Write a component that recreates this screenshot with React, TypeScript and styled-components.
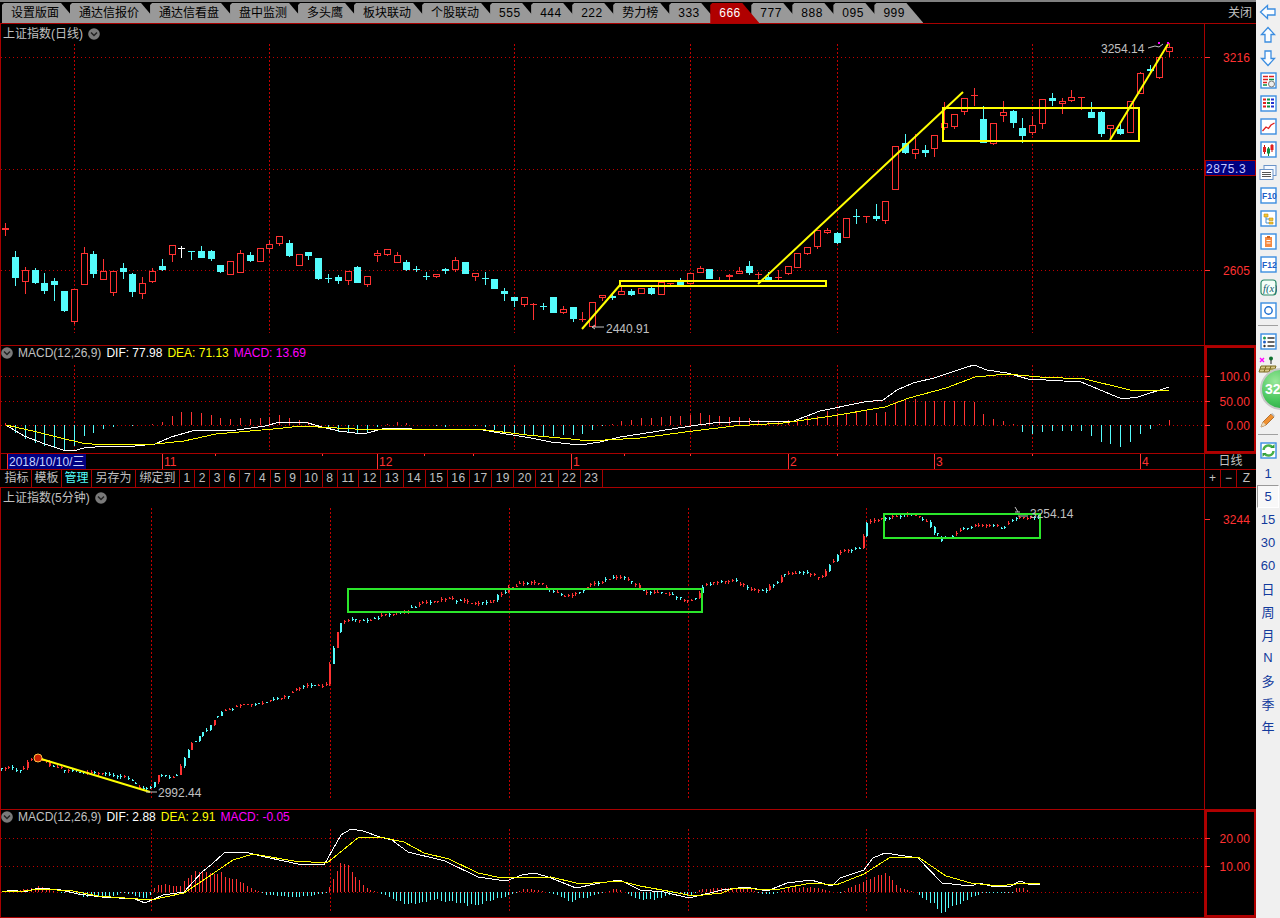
import React from 'react'
import styled, { createGlobalStyle } from 'styled-components'

const RED = '#ff3232'
const CYAN = '#54fcfc'
const LINE = '#a80000'
const DOT = '#c00000'
const GREY = '#c0c0c0'
const YELLOW = '#ffff00'
const GREEN = '#2be62b'

type Candle = [number, number, number, number, 'u' | 'd' | 'w']

// wick top, body top, body bottom, wick bottom, kind
const dayCandles: Candle[] = [
  [223, 228, 230, 236, 'u'], [251, 257, 278, 286, 'd'], [267, 270, 282, 294, 'u'], [268, 270, 283, 284, 'd'],
  [273, 283, 291, 294, 'd'], [278, 281, 285, 301, 'd'], [291, 291, 311, 312, 'd'], [289, 289, 322, 324, 'u'],
  [247, 253, 285, 285, 'u'], [251, 254, 274, 278, 'd'], [259, 271, 280, 280, 'u'], [271, 271, 293, 296, 'u'],
  [263, 268, 272, 279, 'd'], [273, 274, 292, 297, 'd'], [277, 283, 294, 299, 'u'], [268, 271, 282, 283, 'u'],
  [259, 266, 270, 271, 'd'], [245, 245, 255, 262, 'u'], [246, 248, 249, 258, 'w'], [251, 251, 252, 260, 'd'],
  [246, 251, 258, 258, 'd'], [250, 251, 259, 261, 'd'], [265, 265, 272, 273, 'd'], [261, 261, 275, 275, 'u'],
  [250, 253, 273, 273, 'u'], [252, 255, 261, 262, 'd'], [248, 248, 262, 262, 'u'], [240, 244, 249, 253, 'u'],
  [236, 236, 244, 246, 'u'], [240, 243, 256, 257, 'd'], [254, 254, 266, 266, 'u'], [252, 252, 256, 260, 'd'],
  [258, 258, 279, 280, 'd'], [274, 278, 279, 283, 'd'], [275, 277, 281, 284, 'd'], [271, 271, 281, 285, 'u'],
  [266, 267, 283, 283, 'd'], [276, 276, 285, 287, 'u'], [250, 253, 256, 262, 'u'], [249, 249, 255, 256, 'u'],
  [252, 255, 263, 263, 'u'], [260, 262, 270, 271, 'd'], [266, 269, 270, 272, 'd'], [272, 276, 277, 280, 'd'],
  [274, 274, 277, 278, 'u'], [268, 269, 271, 274, 'd'], [257, 260, 270, 272, 'u'], [262, 262, 274, 274, 'd'],
  [273, 273, 277, 281, 'u'], [272, 278, 279, 285, 'd'], [279, 279, 289, 289, 'd'], [288, 291, 294, 301, 'd'],
  [297, 297, 301, 307, 'd'], [297, 297, 305, 307, 'u'], [303, 304, 305, 320, 'u'], [303, 306, 307, 310, 'd'],
  [297, 297, 313, 313, 'd'], [306, 309, 313, 314, 'u'], [307, 307, 319, 322, 'd'], [312, 319, 320, 322, 'u'],
  [302, 302, 327, 327, 'u'], [295, 295, 298, 301, 'u'], [293, 296, 298, 300, 'd'], [287, 291, 295, 295, 'u'],
  [289, 291, 295, 296, 'd'], [288, 288, 294, 294, 'u'], [287, 288, 294, 295, 'd'], [282, 282, 295, 295, 'u'],
  [283, 283, 284, 285, 'u'], [278, 281, 285, 285, 'd'], [273, 273, 284, 284, 'u'], [266, 268, 273, 273, 'u'],
  [269, 269, 279, 279, 'd'], [277, 281, 282, 282, 'u'], [274, 275, 277, 282, 'u'], [267, 271, 274, 274, 'u'],
  [261, 266, 273, 275, 'd'], [272, 274, 275, 279, 'u'], [272, 277, 280, 280, 'd'], [270, 277, 278, 282, 'u'],
  [266, 266, 274, 275, 'u'], [253, 253, 268, 268, 'u'], [247, 247, 254, 255, 'u'], [230, 230, 247, 249, 'u'],
  [228, 230, 233, 234, 'u'], [232, 233, 243, 244, 'd'], [218, 218, 238, 238, 'u'], [209, 216, 217, 224, 'd'],
  [216, 216, 217, 223, 'u'], [204, 216, 219, 221, 'd'], [201, 201, 221, 224, 'u'], [146, 146, 190, 190, 'u'],
  [134, 143, 153, 154, 'd'], [134, 149, 154, 159, 'u'], [145, 150, 153, 157, 'd'], [135, 135, 149, 157, 'u'],
  [102, 123, 128, 130, 'u'], [114, 114, 127, 129, 'u'], [98, 98, 112, 115, 'u'], [88, 95, 96, 106, 'u'],
  [106, 119, 143, 143, 'd'], [123, 123, 144, 145, 'u'], [101, 112, 116, 122, 'u'], [110, 111, 123, 128, 'd'],
  [118, 128, 136, 143, 'd'], [116, 125, 133, 135, 'u'], [99, 99, 124, 129, 'u'], [93, 98, 101, 106, 'd'],
  [98, 101, 104, 114, 'u'], [90, 97, 101, 102, 'u'], [97, 97, 98, 110, 'u'], [102, 112, 118, 118, 'd'],
  [111, 112, 134, 137, 'd'], [125, 125, 129, 140, 'u'], [124, 129, 134, 135, 'd'], [101, 101, 133, 133, 'u'],
  [72, 73, 94, 94, 'u'], [65, 69, 71, 74, 'd'], [57, 57, 78, 79, 'u'], [43, 47, 52, 57, 'u'],
]

const dayHistogram = [
  423, 433, 439, 443, 446, 448, 450, 446, 436, 433, 429, 427, 425, 426, 425, 424, 422, 416, 412, 412,
  413, 415, 418, 419, 418, 419, 418, 417, 415, 418, 420, 422, 426, 429, 432, 432, 433, 432, 427, 424,
  422, 423, 425, 425, 426, 427, 425, 425, 426, 427, 430, 432, 433, 434, 435, 436, 436, 435, 435, 434,
  430, 426, 424, 421, 420, 418, 418, 417, 416, 416, 415, 413, 415, 416, 417, 417, 418, 420, 422, 422,
  420, 419, 417, 416, 411, 413, 413, 411, 411, 413, 412, 402, 400, 399, 401, 401, 401, 401, 401, 402,
  414, 419, 421, 424, 432, 434, 432, 431, 431, 431, 431, 436, 442, 444, 447, 442, 434, 429, 424, 420,
]

const dayDif = '6,425 24,436 45,444 63,450 73,451 84,448 106,446 135,446 155,444 171,437 192,431 237,430 265,426 280,422 308,423 322,427 339,431 355,433 367,433 386,428 412,429 478,429 494,432 531,438 551,442 580,445 600,442 620,437 640,434 691,426 713,423 750,421 791,422 820,411 864,402 883,400 897,390 913,383 934,378 967,367 974,365 987,370 1007,373 1028,379 1081,382 1122,399 1138,397 1169,387'
const dayDea = '6,425 37,432 61,438 82,443 102,445 155,444 184,441 216,434 273,429 302,426 318,427 355,429 388,429 478,429 527,435 571,439 588,441 640,438 693,431 734,426 783,423 832,416 885,407 909,398 946,388 975,377 1007,374 1040,377 1085,379 1130,390 1158,391 1169,390'
const minDif = '2,892 12,890 24,892 39,888 61,890 78,894 102,897 135,899 145,903 163,895 184,892 202,872 212,864 224,853 245,852 265,857 298,864 324,865 341,835 351,829 363,831 380,837 392,840 408,852 445,861 478,877 506,881 522,875 535,873 551,878 576,888 600,883 620,880 640,890 664,892 689,898 722,890 746,887 767,891 787,883 811,880 832,886 840,878 864,870 873,858 885,853 918,858 942,883 971,886 979,883 991,886 1011,886 1020,881 1028,884 1040,884'
const minDea = '2,892 24,891 41,889 73,891 98,896 151,900 184,893 208,877 233,860 253,854 294,861 327,863 343,850 359,837 380,837 404,842 424,853 449,859 478,873 502,878 551,877 580,884 620,881 640,886 673,892 693,896 722,893 734,888 775,890 811,883 836,885 864,874 889,858 918,857 946,876 971,883 999,886 1024,883 1040,884'

const minHistogramShape: number[][] = [
  [2, 0], [12, 1], [30, 4], [39, 6], [49, 3], [61, -1], [73, 0], [82, -6], [114, -5], [122, 0], [139, -5], [149, -7],
  [155, 7], [163, 9], [180, 7], [192, 20], [202, 24], [218, 22], [224, 20], [241, 12], [253, 3], [261, 0], [265, -3],
  [294, -6], [300, -6], [326, -1], [330, 8], [341, 32], [351, 25], [367, 3], [380, -1], [408, -15], [433, -8],
  [473, -15], [506, -5], [526, 4], [547, 0], [571, -10], [600, -2], [616, 4], [640, -9], [655, -8], [673, -1],
  [690, -5], [700, 3], [730, 5], [750, 3], [760, -2], [775, -2], [790, 5], [815, 5], [830, 1], [840, -1], [846, 3],
  [860, 10], [880, 20], [886, 20], [900, 5], [912, 1], [915, 0], [920, -5], [935, -15], [942, -22], [950, -18],
  [965, -10], [971, -5], [985, -1], [1012, -1], [1015, 4], [1025, 4], [1030, 0], [1040, 0],
]

const minPriceShape: number[][] = [
  [0, 770], [8, 768], [20, 772], [30, 760], [38, 758], [50, 765], [65, 770], [90, 773], [120, 776], [135, 785], [148, 790],
  [158, 775], [175, 778], [190, 745], [205, 730], [222, 712], [240, 706], [262, 703], [285, 697], [302, 686], [325, 687],
  [330, 660], [338, 625], [350, 618], [365, 622], [385, 615], [400, 612], [425, 603], [445, 598], [470, 604], [490, 602],
  [510, 587], [530, 581], [550, 590], [565, 598], [590, 585], [620, 576], [640, 590], [670, 595], [690, 603], [704, 585],
  [730, 580], [750, 590], [765, 590], [785, 574], [800, 572], [820, 578], [838, 553], [860, 547], [866, 522], [885, 518],
  [905, 514], [925, 520], [940, 541], [960, 530], [985, 523], [1000, 530], [1015, 518], [1040, 517],
]

const interp = (shape: number[][], x: number) => {
  for (let i = 1; i < shape.length; i++) {
    if (x <= shape[i][0]) {
      const [x0, y0] = shape[i - 1]
      const [x1, y1] = shape[i]
      return y0 + ((y1 - y0) * (x - x0)) / (x1 - x0)
    }
  }
  return shape[shape.length - 1][1]
}

// repeatable noise so the small bars do not look like a straight ramp
const noise = (i: number) => {
  const s = Math.sin(i * 12.9898) * 43758.5453
  return s - Math.floor(s)
}

const MIN_STEP = 3.73
const minBars = Array.from({ length: 279 }, (_, i) => 1 + i * MIN_STEP)

const minCandles: Candle[] = minBars.map((x, i) => {
  const close = interp(minPriceShape, x) + (noise(i) - 0.5) * 3
  const open = interp(minPriceShape, x - MIN_STEP) + (noise(i - 1) - 0.5) * 3
  const top = Math.round(Math.min(open, close))
  // bodies stay flat unless the price really moves
  const bottom = Math.abs(open - close) > 4 ? Math.round(Math.max(open, close)) : top + 1
  const rising = noise(i + 29) > 0.45
  return [top - Math.round(noise(i + 7) * 2.4), top, bottom, bottom + Math.round(noise(i + 13) * 2.4), rising ? 'u' : 'd']
})

const GlobalStyle = createGlobalStyle`
  html, body {
    margin: 0;
    background: #000;
    overflow: hidden;
  }
  body {
    font-family: 'Liberation Sans', 'Noto Sans CJK SC', sans-serif;
    font-size: 12px;
    color: ${GREY};
  }
  svg {
    display: block;
  }
`

const Screen = styled.div`
  display: flex;
  width: 1280px;
  height: 918px;
  overflow: hidden;
`

const Main = styled.div`
  display: flex;
  flex-direction: column;
  width: 1256px;
  flex: none;
`

const TabBar = styled.div`
  display: flex;
  align-items: flex-end;
  box-sizing: border-box;
  height: 24px;
  padding-left: 2px;
  border-top: 2px solid #808080;
  border-bottom: 1px solid ${LINE};
`

const Tab = styled.div<{ $active?: boolean; $digits?: boolean }>`
  position: relative;
  z-index: ${(p) => (p.$active ? 2 : 1)};
  height: 20px;
  line-height: 20px;
  padding: 0 ${(p) => (p.$digits ? 18.5 : 19)}px 0 9px;
  margin-right: -8px;
  letter-spacing: ${(p) => (p.$digits ? 0.5 : 0)}px;
  white-space: nowrap;
  color: ${(p) => (p.$active ? '#fff' : '#000')};
  background: ${(p) => (p.$active ? '#b00000' : '#999999')};
  clip-path: polygon(2px 0, calc(100% - 17px) 0, 100% 100%, 0 100%, 0 2px);
`

const CloseButton = styled.div`
  margin-left: auto;
  margin-right: 4px;
  height: 20px;
  line-height: 20px;
`

const Panel = styled.section<{ $height: number }>`
  display: flex;
  box-sizing: border-box;
  height: ${(p) => p.$height}px;
  border-left: 1px solid ${LINE};
  border-bottom: 1px solid ${LINE};
  flex: none;
`

const PlotColumn = styled.div`
  display: flex;
  flex-direction: column;
  width: 1203px;
`

const Header = styled.div<{ $height: number }>`
  display: flex;
  align-items: flex-start;
  gap: 5px;
  height: ${(p) => p.$height}px;
  padding: 3px 0 0 2px;
  box-sizing: border-box;
  line-height: 15px;
  white-space: nowrap;
`

const MacdHeader = styled(Header)`
  padding: 0;
`

const Reading = styled.span<{ $color: string }>`
  color: ${(p) => p.$color};
`

const ChevronIcon = styled.svg`
  flex: none;
  margin-top: 1px;
`

const AxisColumn = styled.div<{ $boxed?: boolean }>`
  width: 52px;
  box-sizing: border-box;
  border-left: 1px solid ${LINE};
  box-shadow: ${(p) => (p.$boxed ? 'inset 0 0 0 2px #b00000' : 'none')};
`

const ChartText = styled.text<{ $color?: string }>`
  font-family: 'Liberation Sans', 'Noto Sans CJK SC', sans-serif;
  font-size: 12px;
  fill: ${(p) => p.$color || GREY};
`

const AxisText = styled(ChartText)`
  text-anchor: end;
  letter-spacing: 0.1px;
`

const FrameText = styled.text`
  font-family: 'Liberation Sans', sans-serif;
  font-size: 8.5px;
  font-weight: 700;
  fill: #1f5fc8;
`

const FormulaText = styled.text`
  font-family: 'Liberation Serif', serif;
  font-style: italic;
  font-size: 10.5px;
  fill: #0f5a70;
`

const TimeRow = styled.div`
  display: flex;
  box-sizing: border-box;
  height: 16px;
  flex: none;
  border-left: 1px solid ${LINE};
  border-bottom: 1px solid ${LINE};
`

const DayLabel = styled.div`
  flex: 1;
  text-align: center;
  line-height: 15px;
  border-left: 1px solid ${LINE};
`

const ToolRow = styled.div`
  display: flex;
  box-sizing: border-box;
  height: 18px;
  flex: none;
  padding-left: 2px;
  border-bottom: 1px solid ${LINE};
  line-height: 17px;
`

const ToolButton = styled.div<{ $narrow?: boolean; $selected?: boolean; $number?: boolean }>`
  padding: 0 ${(p) => (p.$narrow ? 2.5 : 3.5)}px;
  border-right: 1px solid ${LINE};
  letter-spacing: ${(p) => (p.$number ? 0.4 : 0)}px;
  color: ${(p) => (p.$selected ? CYAN : GREY)};
`

const ZoomButtons = styled.div`
  display: flex;
  margin-left: auto;
  width: 52px;
  text-align: center;
`

const ZoomButton = styled.div<{ $width: number }>`
  box-sizing: border-box;
  width: ${(p) => p.$width}px;
  border-left: 1px solid ${LINE};
`

const Sidebar = styled.aside`
  display: flex;
  flex-direction: column;
  align-items: center;
  flex: 1;
  background: #f0f0f0;
`

const SideItem = styled.div`
  display: flex;
  align-items: center;
  justify-content: center;
  width: 100%;
  height: 23px;
  flex: none;
`

const SideDivider = styled.div`
  width: 20px;
  height: 1px;
  margin: 3px 0 4px;
  background: #a0a0a0;
  flex: none;
`

const BallSlot = styled(SideItem)`
  position: relative;
  height: 32px;
`

const Ball = styled.div`
  position: absolute;
  left: 4px;
  top: -8px;
  width: 42px;
  height: 42px;
  box-sizing: border-box;
  border: 2px solid #c8c8c8;
  border-radius: 50%;
  padding-left: 3px;
  line-height: 38px;
  font-size: 14px;
  font-weight: bold;
  color: #fff;
  background: radial-gradient(circle at 35% 30%, #9ae89a 0%, #45c45a 55%, #1f9a3c 100%);
`

const PeriodButton = styled(SideItem)<{ $active?: boolean }>`
  font-size: 13px;
  color: #123a9c;
  box-sizing: border-box;
  ${(p) =>
    p.$active
      ? `
    background: #f8f8f8;
    border-top: 1px solid #999;
    border-left: 1px solid #999;
    border-bottom: 1px solid #fff;
    border-right: 1px solid #fff;
    width: 22px;
  `
      : ''}
`

const tabs = ['设置版面', '通达信报价', '通达信看盘', '盘中监测', '多头鹰', '板块联动', '个股联动', '555', '444', '222', '势力榜', '333', '666', '777', '888', '095', '999']
const toolNumbers = [1, 2, 3, 6, 7, 4, 5, 9, 10, 8, 11, 12, 13, 14, 15, 16, 17, 19, 20, 21, 22, 23]
const periods = ['1', '5', '15', '30', '60', '日', '周', '月', 'N', '多', '季', '年']

const dayX = (i: number) => Math.round(5.3 + 9.78 * i) + 0.5

const Chevron: React.FC = () => (
  <ChevronIcon width="12" height="12" viewBox="0 0 12 12">
    <circle cx="6" cy="6" r="5.8" fill="#7a7a7a" />
    <path d="M3 4.5 L6 7.5 L9 4.5" fill="none" stroke="#222" strokeWidth="1.5" />
  </ChevronIcon>
)

const Plot: React.FC<{ top: number; height: number; children: React.ReactNode }> = ({ top, height, children }) => (
  <svg width="1203" height={height} viewBox={`1 ${top} 1203 ${height}`} shapeRendering="crispEdges">
    {children}
  </svg>
)

const Axis: React.FC<{ top: number; height: number; children: React.ReactNode }> = ({ top, height, children }) => (
  <svg width="51" height={height} viewBox={`1205 ${top} 51 ${height}`}>
    {children}
  </svg>
)

const Tick: React.FC<{ y: number; label: string }> = ({ y, label }) => (
  <>
    <line x1="1205" x2="1210" y1={y + 0.5} y2={y + 0.5} stroke={RED} shapeRendering="crispEdges" />
    <AxisText x="1250" y={y + 4.5} $color={RED}>
      {label}
    </AxisText>
  </>
)

const HGrid: React.FC<{ ys: number[] }> = ({ ys }) => (
  <>
    {ys.map((y) => (
      <line key={y} x1="1" x2="1204" y1={y + 0.5} y2={y + 0.5} stroke={DOT} strokeDasharray="1 3" />
    ))}
  </>
)

const VGrid: React.FC<{ xs: number[]; from: number; to: number }> = ({ xs, from, to }) => (
  <>
    {xs.map((x) => (
      <line key={x} x1={x + 0.5} x2={x + 0.5} y1={from} y2={to} stroke={DOT} strokeDasharray="2 2" />
    ))}
  </>
)

const CandleMark: React.FC<{ x: number; c: Candle; half: number }> = ({ x, c, half }) => {
  const [wickTop, top, bottom, wickBottom, kind] = c
  const color = kind === 'u' ? RED : kind === 'd' ? CYAN : '#ffffff'
  const flat = bottom - top <= 2
  return (
    <>
      <line x1={x} x2={x} y1={wickTop} y2={top} stroke={color} />
      <line x1={x} x2={x} y1={bottom} y2={wickBottom} stroke={color} />
      {flat || kind !== 'u' ? (
        <rect x={x - half - 0.5} y={top} width={half * 2 + 1} height={Math.max(bottom - top, 1)} fill={color} />
      ) : (
        <rect x={x - half} y={top + 0.5} width={half * 2} height={bottom - top - 1} fill="#000" stroke={color} />
      )}
    </>
  )
}

const Bars: React.FC<{ bars: { x: number; tip: number }[]; zero: number }> = ({ bars, zero }) => (
  <>
    {bars.map((b, i) => (
      <line key={i} x1={b.x} x2={b.x} y1={zero} y2={b.tip} stroke={b.tip < zero ? RED : CYAN} />
    ))}
  </>
)

const Line: React.FC<{ points: string; color: string }> = ({ points, color }) => (
  <polyline points={points} fill="none" stroke={color} strokeWidth="1" />
)

const Frame: React.FC<{ children?: React.ReactNode }> = ({ children }) => (
  <svg width="17" height="17" viewBox="0 0 17 17">
    <rect x="1" y="1" width="15" height="15" fill="#fff" stroke="#3b8de0" strokeWidth="1.4" />
    {children}
  </svg>
)

const Arrow: React.FC<{ turn: number }> = ({ turn }) => (
  <svg width="18" height="18" viewBox="0 0 18 18">
    <path
      transform={`rotate(${turn} 9 9)`}
      d="M9 1.5 L15.5 8.5 H12 V16 H6 V8.5 H2.5 Z"
      fill="#fbfdff"
      stroke="#3b8de0"
      strokeWidth="1.3"
    />
  </svg>
)

const sideIcons: React.ReactNode[] = [
  <Arrow turn={-90} />,
  <Arrow turn={0} />,
  <Arrow turn={180} />,
  <Frame>
    <path d="M3 4.5h5M3 7.5h5M3 10.5h4M9 4.5h5" stroke="#e02020" strokeWidth="1.5" />
    <path d="M9 7.5h5M3 13h4" stroke="#109040" strokeWidth="1.5" />
    <circle cx="11.5" cy="12" r="3" fill="#eee" stroke="#777" />
  </Frame>,
  <Frame>
    <path d="M3 4.5h3M3 8h3M3 11.5h3" stroke="#e02020" strokeWidth="2" />
    <path d="M7 4.5h3M7 8h3M7 11.5h3" stroke="#109040" strokeWidth="2" />
    <path d="M11 4.5h3M11 8h3M11 11.5h3" stroke="#2030d0" strokeWidth="2" />
  </Frame>,
  <Frame>
    <path d="M2.5 13 L6 9 L8.5 10.5 L11 7 L14.5 5" fill="none" stroke="#e02020" strokeWidth="1.3" />
  </Frame>,
  <Frame>
    <path d="M4.5 4v9M12 3v8" stroke="#c01010" />
    <path d="M8.5 6v9" stroke="#108030" />
    <rect x="3" y="6" width="3" height="5" fill="#e02020" />
    <rect x="7" y="7.5" width="3" height="5" fill="#109040" />
    <rect x="10.5" y="4" width="3" height="5" fill="#e02020" />
  </Frame>,
  <svg width="18" height="17" viewBox="0 0 18 17">
    <rect x="5" y="1.5" width="12" height="10" fill="#f4f8ff" stroke="#6a93c8" />
    <rect x="1" y="5.5" width="13" height="10" fill="#fff" stroke="#6a93c8" />
    <path d="M3 8.5h9M3 10.5h9M3 12.5h9" stroke="#555" />
  </svg>,
  <Frame>
    <FrameText x="2" y="12">F10</FrameText>
  </Frame>,
  <Frame>
    <path d="M4 4h4v3H4zM9 8h4v2.5H9zM9 12h4v2H9z" fill="#f4c430" stroke="#c09010" strokeWidth="0.6" />
    <path d="M6 7v6h3M6 9h3" fill="none" stroke="#4a90d0" />
  </Frame>,
  <Frame>
    <path d="M5 4h7v10H5z" fill="#f58a42" />
    <path d="M7 3h3v2H7z" fill="#d0601c" />
    <path d="M6.5 7.5h4M6.5 10h4" stroke="#fff" />
  </Frame>,
  <Frame>
    <FrameText x="2" y="12">F12</FrameText>
  </Frame>,
  <svg width="17" height="17" viewBox="0 0 17 17">
    <rect x="1" y="1" width="15" height="15" rx="3" fill="#f4fff8" stroke="#2a8a68" strokeWidth="1.2" />
    <FormulaText x="3" y="12.5">f(x)</FormulaText>
  </svg>,
  <Frame>
    <circle cx="8.5" cy="8.5" r="3.7" fill="none" stroke="#1f6fd0" strokeWidth="1.4" />
  </Frame>,
]

const App: React.FC = () => {
  const dayBars = dayHistogram.map((tip, i) => ({ x: dayX(i), tip }))
  const minMacdBars = minBars
    .filter((x) => x < 1040)
    .map((x, i) => {
      const h = interp(minHistogramShape, x) * (0.78 + noise(i + 3) * 0.22)
      return { x: Math.round(x) + 0.5, tip: Math.round(892 - h) }
    })

  return (
    <Screen>
      <GlobalStyle />
      <Main>
        <TabBar>
          {tabs.map((t) => (
            <Tab key={t} $active={t === '666'} $digits={/^\d+$/.test(t)}>
              {t}
            </Tab>
          ))}
          <CloseButton>关闭</CloseButton>
        </TabBar>

        <Panel $height={322}>
          <PlotColumn>
            <Header $height={18}>
              上证指数(日线) <Chevron />
            </Header>
            <Plot top={42} height={303}>
              <HGrid ys={[57, 169, 270]} />
              <VGrid xs={[74, 269, 514, 690, 837, 1032]} from={44} to={333} />
              {dayCandles.map((c, i) => (
                <CandleMark key={i} x={dayX(i)} c={c} half={3} />
              ))}
              <g shapeRendering="auto">
                <g stroke={YELLOW} strokeWidth="2" fill="none">
                  <line x1="582" y1="329" x2="620" y2="285" />
                  <rect x="620" y="281" width="206" height="5" />
                  <line x1="758" y1="284" x2="963" y2="92" />
                  <rect x="943" y="108" width="196" height="33" />
                  <line x1="1110" y1="140" x2="1168" y2="44" />
                </g>
                <ChartText x="606" y="333">2440.91</ChartText>
                <path d="M592 327 H604 M592 327 l3 -2 M592 327 l3 2" stroke={GREY} fill="none" />
                <ChartText x="1101" y="53">3254.14</ChartText>
                <path d="M1148 48 L1155 46 L1159 47 L1163 44" stroke={GREY} fill="none" />
                <rect x="1158" y="42" width="2" height="2" fill="#ff00ff" />
                <rect x="1167" y="42" width="2" height="2" fill="#ff00ff" />
              </g>
            </Plot>
          </PlotColumn>
          <AxisColumn>
            <Axis top={24} height={321}>
              <Tick y={57} label="3216" />
              <Tick y={270} label="2605" />
              <rect x="1205.5" y="160.5" width="50" height="15" fill="#000080" stroke={LINE} />
              <ChartText x="1206" y="172.5" $color="#c8c8ff" letterSpacing="0.6">2875.3</ChartText>
            </Axis>
          </AxisColumn>
        </Panel>

        <Panel $height={108}>
          <PlotColumn>
            <MacdHeader $height={19}>
              <Chevron />
              <Reading $color={GREY}>MACD(12,26,9)</Reading>
              <Reading $color="#fff">DIF: 77.98</Reading>
              <Reading $color={YELLOW}>DEA: 71.13</Reading>
              <Reading $color="#ff00ff">MACD: 13.69</Reading>
            </MacdHeader>
            <Plot top={365} height={88}>
              <HGrid ys={[376, 401, 425]} />
              <VGrid xs={[74, 269, 514, 690, 837, 1032]} from={365} to={450} />
              <Bars bars={dayBars} zero={425} />
              <Line points={dayDif} color="#fff" />
              <Line points={dayDea} color={YELLOW} />
            </Plot>
          </PlotColumn>
          <AxisColumn $boxed>
            <Axis top={346} height={107}>
              <Tick y={376} label="100.0" />
              <Tick y={401} label="50.00" />
              <Tick y={425} label="0.00" />
            </Axis>
          </AxisColumn>
        </Panel>

        <TimeRow>
          <svg width="1203" height="15" viewBox="1 454 1203 15">
            <rect x="8" y="454" width="78" height="15" fill="#000080" />
            <ChartText x="9" y="465.5" $color="#c8d4ff">2018/10/10/三</ChartText>
            {[7, 162, 377, 571, 788, 934, 1140].map((x) => (
              <line key={x} x1={x + 0.5} x2={x + 0.5} y1="454" y2="469" stroke={RED} shapeRendering="crispEdges" />
            ))}
            {[215, 322, 424, 473, 624, 690, 837, 1032].map((x) => (
              <line key={x} x1={x + 0.5} x2={x + 0.5} y1="454" y2="456" stroke={RED} shapeRendering="crispEdges" />
            ))}
            <ChartText x="164" y="465.5" $color={RED}>11</ChartText>
            <ChartText x="379" y="465.5" $color={RED}>12</ChartText>
            <ChartText x="573" y="465.5" $color={RED}>1</ChartText>
            <ChartText x="790" y="465.5" $color={RED}>2</ChartText>
            <ChartText x="936" y="465.5" $color={RED}>3</ChartText>
            <ChartText x="1142" y="465.5" $color={RED}>4</ChartText>
          </svg>
          <DayLabel>日线</DayLabel>
        </TimeRow>

        <ToolRow>
          <ToolButton $narrow>指标</ToolButton>
          <ToolButton $narrow>模板</ToolButton>
          <ToolButton $narrow $selected>管理</ToolButton>
          <ToolButton>另存为</ToolButton>
          <ToolButton>绑定到</ToolButton>
          {toolNumbers.map((n) => (
            <ToolButton key={n} $number>{n}</ToolButton>
          ))}
          <ZoomButtons>
            <ZoomButton $width={16}>+</ZoomButton>
            <ZoomButton $width={16}>−</ZoomButton>
            <ZoomButton $width={20}>Z</ZoomButton>
          </ZoomButtons>
        </ToolRow>

        <Panel $height={322}>
          <PlotColumn>
            <Header $height={18}>
              上证指数(5分钟) <Chevron />
            </Header>
            <Plot top={506} height={303}>
              <VGrid xs={[151, 330, 509, 688, 866]} from={508} to={800} />
              {minCandles.map((c, i) => (
                <CandleMark key={i} x={Math.round(minBars[i]) + 0.5} c={c} half={0.5} />
              ))}
              <g shapeRendering="auto">
                <g stroke={GREEN} strokeWidth="2" fill="none">
                  <rect x="348" y="589" width="354" height="23" />
                  <rect x="884" y="514" width="156" height="24" />
                </g>
                <line x1="38" y1="758" x2="150" y2="792" stroke={YELLOW} strokeWidth="2" />
                <circle cx="38" cy="758" r="4" fill="#c82000" stroke="#ffc040" strokeWidth="1" />
                <path d="M146 792 H157" stroke={GREY} />
                <ChartText x="158" y="797">2992.44</ChartText>
                <path d="M1015 512 H1020 M1015 507 L1018 512 M1018 516 H1028" stroke={GREY} fill="none" />
                <ChartText x="1030" y="518">3254.14</ChartText>
              </g>
            </Plot>
          </PlotColumn>
          <AxisColumn>
            <Axis top={488} height={321}>
              <Tick y={519} label="3244" />
            </Axis>
          </AxisColumn>
        </Panel>

        <Panel $height={108}>
          <PlotColumn>
            <MacdHeader $height={19}>
              <Chevron />
              <Reading $color={GREY}>MACD(12,26,9)</Reading>
              <Reading $color="#fff">DIF: 2.88</Reading>
              <Reading $color={YELLOW}>DEA: 2.91</Reading>
              <Reading $color="#ff00ff">MACD: -0.05</Reading>
            </MacdHeader>
            <Plot top={829} height={88}>
              <HGrid ys={[838, 866, 892]} />
              <VGrid xs={[151, 330, 509, 688, 866]} from={829} to={913} />
              <Bars bars={minMacdBars} zero={892} />
              <Line points={minDif} color="#fff" />
              <Line points={minDea} color={YELLOW} />
            </Plot>
          </PlotColumn>
          <AxisColumn $boxed>
            <Axis top={810} height={107}>
              <Tick y={838} label="20.00" />
              <Tick y={866} label="10.00" />
            </Axis>
          </AxisColumn>
        </Panel>
      </Main>

      <Sidebar>
        {sideIcons.map((icon, i) => (
          <SideItem key={i}>{icon}</SideItem>
        ))}
        <SideDivider />
        <SideItem>
          <Frame>
            <circle cx="4.5" cy="5" r="1.5" fill="#1a9a50" />
            <circle cx="4.5" cy="9" r="1.5" fill="#1f5fc8" />
            <circle cx="4.5" cy="13" r="1.2" fill="#333" />
            <path d="M7.5 5h7M7.5 9h7M7.5 13h7" stroke="#333" strokeWidth="1.3" />
          </Frame>
        </SideItem>
        <SideItem>
          <svg width="20" height="18" viewBox="0 0 20 18">
            <path d="M2 2 L6 6 M6 2 L2 6" stroke="#ff00ff" strokeWidth="1.4" />
            <circle cx="13" cy="2.5" r="2" fill="#107030" />
            <path d="M13 4v4" stroke="#222" />
            <path d="M3 10h15l-2 6H1z" fill="#d8c888" stroke="#7a6a20" />
            <path d="M2 13h15M8 10l-2 6M13 10l-2 6" stroke="#7a6a20" />
          </svg>
        </SideItem>
        <BallSlot>
          <Ball>32</Ball>
        </BallSlot>
        <SideItem>
          <svg width="16" height="16" viewBox="0 0 16 16">
            <path d="M1 15 L3 10 L11 2 L14 5 L6 13 Z" fill="#f09030" stroke="#a06020" strokeWidth="0.8" />
            <path d="M1 15 L3 10 L6 13 Z" fill="#e8d8b8" />
            <path d="M11 2 L14 5 L15 4 L12.5 1 Z" fill="#c0c0c0" />
          </svg>
        </SideItem>
        <SideDivider />
        <SideItem>
          <Frame>
            <path d="M3.5 8a5 5 0 0 1 9-2.5" fill="none" stroke="#48b048" strokeWidth="2.4" />
            <path d="M13.5 9a5 5 0 0 1-9 2.5" fill="none" stroke="#48b048" strokeWidth="2.4" />
            <path d="M10.5 6h4V2zM6.5 11h-4v4z" fill="#2f9a3a" />
          </Frame>
        </SideItem>
        {periods.map((p) => (
          <PeriodButton key={p} $active={p === '5'}>
            {p}
          </PeriodButton>
        ))}
      </Sidebar>
    </Screen>
  )
}

export default App
